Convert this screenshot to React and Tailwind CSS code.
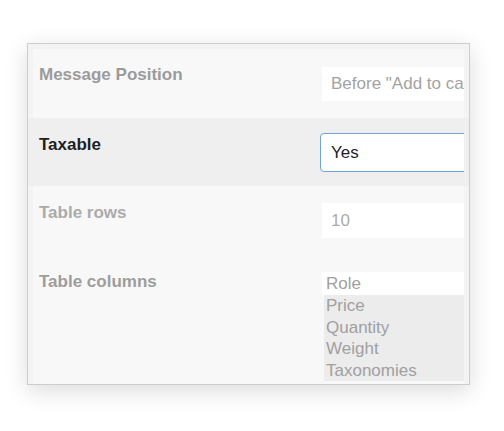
import React from 'react';

const font = { fontFamily: '"Liberation Sans", Arial, sans-serif' };

function Row({ label, labelClass, children, className = '' }) {
  return (
    <div className={`flex overflow-hidden ${className}`}>
      <div className={`w-[289px] shrink-0 pl-[6px] pt-[16px] text-[17px] leading-[20px] font-bold ${labelClass}`}>
        {label}
      </div>
      <div className="flex-1 min-w-0">{children}</div>
    </div>
  );
}

export default function App() {
  const columns = ['Price', 'Quantity', 'Weight', 'Taxonomies'];

  return (
    <div className="w-[504px] h-[431px] bg-white pt-[43px] pl-[27px]" style={font}>
      <div className="w-[443px] h-[342px] border border-[#cdcdcd] bg-[#f3f3f3] overflow-hidden px-[5px] pt-[5px] shadow-[0_6px_22px_rgba(0,0,0,0.14)]">
        {/* message position */}
        <Row label="Message Position" labelClass="text-[#9b9b9b]" className="h-[69px] bg-[#f8f8f8]">
          <div className="mt-[18px] h-[34px] w-[200px] bg-white pl-[9px] flex items-center text-[17px] text-[#a3a3a3] whitespace-nowrap">
            Before "Add to cart"
          </div>
        </Row>

        {/* taxable */}
        <div className="-mx-[5px] px-[5px] bg-[#efefef]">
          <Row label="Taxable" labelClass="text-[#1f1f1f] pt-[17px]" className="h-[68px]">
            <div className="mt-[15px] -ml-[2px] h-[39px] w-[200px] bg-white border-[1.5px] border-[#6fa3d6] rounded-[4px] pl-[10px] flex items-center text-[17px] text-[#1f1f1f]">
              Yes
            </div>
          </Row>
        </div>

        {/* table rows */}
        <Row label="Table rows" labelClass="text-[#ababab] pt-[17px]" className="h-[69px] bg-[#f8f8f8]">
          <div className="mt-[17px] h-[35px] w-[200px] bg-white pl-[9px] flex items-center text-[17px] text-[#ababab]">
            10
          </div>
        </Row>

        {/* table columns multiselect */}
        <Row label="Table columns" labelClass="text-[#9d9d9d] pt-[17px]" className="h-[130px] bg-[#f8f8f8]">
          <div className="mt-[17px] w-[200px] text-[17px] leading-[21.5px] text-[#a0a0a0]">
            <div className="h-[23px] bg-white pl-[4px] flex items-center">Role</div>
            <div className="ml-[2px] bg-[#ececec] pl-[2px]">
              {columns.map((c) => (
                <div key={c}>{c}</div>
              ))}
            </div>
          </div>
        </Row>
      </div>
    </div>
  );
}
